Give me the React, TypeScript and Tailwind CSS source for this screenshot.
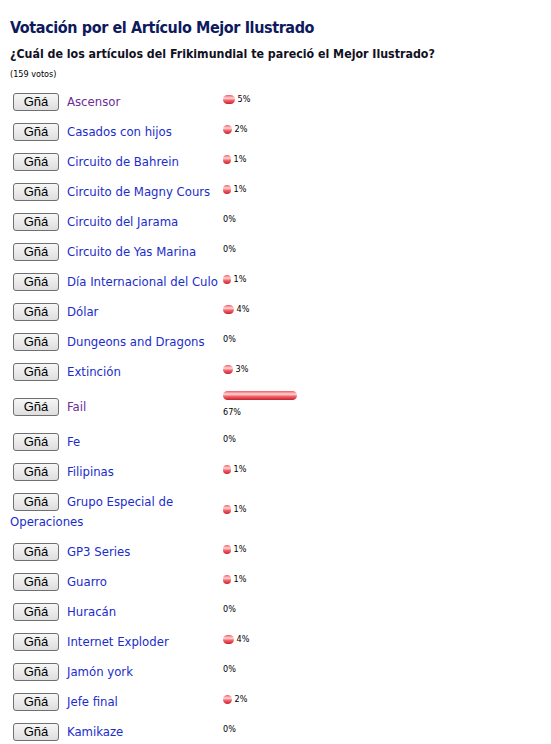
import React from 'react';

type Option = {
    name: string;
    pct: number;
    visited?: boolean;
};

const options: Option[] = [
    { name: 'Ascensor', pct: 5, visited: true },
    { name: 'Casados con hijos', pct: 2 },
    { name: 'Circuito de Bahrein', pct: 1 },
    { name: 'Circuito de Magny Cours', pct: 1 },
    { name: 'Circuito del Jarama', pct: 0 },
    { name: 'Circuito de Yas Marina', pct: 0 },
    { name: 'Día Internacional del Culo', pct: 1 },
    { name: 'Dólar', pct: 4 },
    { name: 'Dungeons and Dragons', pct: 0 },
    { name: 'Extinción', pct: 3 },
    { name: 'Fail', pct: 67, visited: true },
    { name: 'Fe', pct: 0 },
    { name: 'Filipinas', pct: 1 },
    { name: 'Grupo Especial de Operaciones', pct: 1 },
    { name: 'GP3 Series', pct: 1 },
    { name: 'Guarro', pct: 1 },
    { name: 'Huracán', pct: 0 },
    { name: 'Internet Exploder', pct: 4 },
    { name: 'Jamón york', pct: 0 },
    { name: 'Jefe final', pct: 2 },
    { name: 'Kamikaze', pct: 0 },
];

const font = "font-['Tahoma','DejaVu_Sans_Condensed','DejaVu_Sans',sans-serif]";

const Bar: React.FC<{ pct: number }> = ({ pct }) => (
    <span
        className="inline-block h-[9px] rounded-full align-middle bg-[linear-gradient(to_bottom,#f25a62_0%,#ffd6d8_35%,#f3646b_60%,#c8202c_100%)]"
        style={{ width: 7 + pct }}
    />
);

const Row: React.FC<{ option: Option }> = ({ option }) => (
    <tr>
        <td className="w-[213px] p-0 py-[5px] align-middle text-[13px] leading-[20px]">
            <div className="leading-[20px]">
                <button className="ml-[3px] mr-[8px] mt-[1px] inline-block h-[18px] w-[46px] rounded-[3px] border border-[#707070] bg-[linear-gradient(to_bottom,#f6f6f6,#dedede)] align-top font-['Liberation_Sans',Arial,sans-serif] text-[13px] leading-[16px] text-black">
                    Gñá
                </button>
                <a
                    href="#"
                    className={option.visited ? 'text-[#6b2c9c]' : 'text-[#1b2ccc]'}
                >
                    {option.name}
                </a>
            </div>
        </td>
        <td className="w-[84px] p-0 pb-[6px] align-middle text-[9px] leading-[17px] text-black">
            {option.pct > 0 && <Bar pct={option.pct} />}{' '}
            <span className="align-middle">{option.pct}%</span>
        </td>
        <td />
    </tr>
);

export default function App() {
    return (
        <div className={`min-h-screen bg-white px-[10px] pt-[17px] ${font}`}>
            <h2 className="text-[16px] font-bold leading-[22px] tracking-[-0.4px] text-[#0d1a5c]">
                Votación por el Artículo Mejor Ilustrado
            </h2>
            <p className="mt-[6px] text-[12.3px] font-bold leading-[18px] text-[#111122]">
                ¿Cuál de los artículos del Frikimundial te pareció el Mejor Ilustrado?
            </p>
            <p className="mt-[4px] text-[9px] leading-[14px] text-black">(159 votos)</p>
            <table className="mt-[6px] border-collapse">
                <tbody>
                    {options.map((o) => (
                        <Row key={o.name} option={o} />
                    ))}
                </tbody>
            </table>
        </div>
    );
}
